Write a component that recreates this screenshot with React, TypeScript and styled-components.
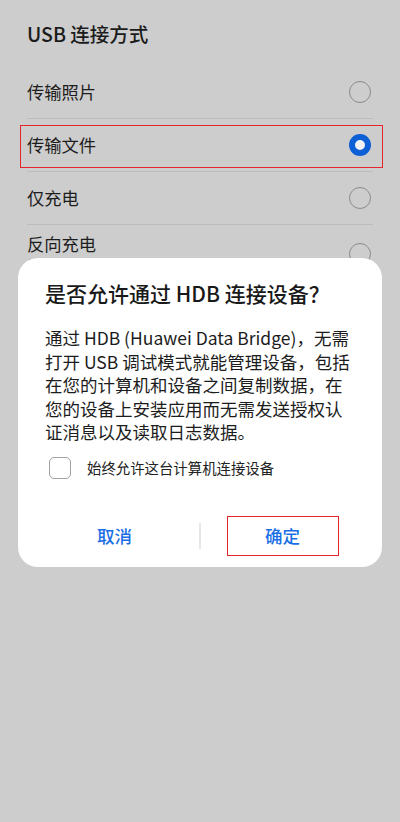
import React, { useState } from "react";
import styled, { createGlobalStyle } from "styled-components";

const GlobalStyle = createGlobalStyle`
  html, body {
    margin: 0;
    padding: 0;
    background: #cdcdcd;
  }
  body {
    font-family: "Noto Sans CJK SC", "Noto Sans", Roboto, sans-serif;
    -webkit-font-smoothing: antialiased;
  }
`;

const Screen = styled.div`
  position: relative;
  width: 400px;
  height: 822px;
  background: #cdcdcd;
  overflow: hidden;
`;

const Page = styled.div`
  display: flex;
  flex-direction: column;
  padding: 14px 27px 0 27px;
`;

const PageTitle = styled.h1`
  margin: 0;
  font-size: 19.5px;
  line-height: 40px;
  font-weight: 500;
  color: #1b1b1b;
  height: 40px;
  margin-bottom: 12px;
`;

const OptionList = styled.div`
  display: flex;
  flex-direction: column;
`;

const Option = styled.div<{ $last?: boolean }>`
  position: relative;
  display: flex;
  align-items: center;
  justify-content: space-between;
  min-height: 52px;
  border-bottom: ${(p) => (p.$last ? "none" : "1px solid #bcbcbc")};
`;

const OptionText = styled.div<{ $withHint?: boolean }>`
  display: flex;
  flex-direction: column;
  padding: ${(p) => (p.$withHint ? "7px 0 8px" : "0")};
`;

const OptionLabel = styled.span`
  font-size: 17.3px;
  color: #1d1d1d;
  line-height: 24px;
`;

const OptionHint = styled.span`
  font-size: 13px;
  color: #777;
  line-height: 18px;
`;

const Radio = styled.span<{ $on?: boolean }>`
  box-sizing: border-box;
  width: 22px;
  height: 22px;
  margin-right: 2px;
  border-radius: 50%;
  border: ${(p) => (p.$on ? "6px solid #0d5fd6" : "1.3px solid #8b8b8b")};
  background: ${(p) => (p.$on ? "#f2f2f2" : "transparent")};
`;

const Highlight = styled.span`
  position: absolute;
  left: -7px;
  right: -10px;
  top: 6px;
  bottom: 3px;
  border: 1.5px solid #e4262c;
  pointer-events: none;
`;

const Dialog = styled.div`
  position: absolute;
  left: 18px;
  top: 258px;
  width: 364px;
  box-sizing: border-box;
  background: #ffffff;
  border-radius: 20px;
  padding: 21px 27px 11px 27px;
  display: flex;
  flex-direction: column;
`;

const DialogTitle = styled.h2`
  margin: 0;
  font-size: 21px;
  line-height: 28px;
  font-weight: 500;
  color: #191919;
  white-space: nowrap;
`;

const DialogBody = styled.p`
  margin: 19px 0 0 0;
  font-size: 17.5px;
  line-height: 23.5px;
  color: #1c1c1c;
`;

const CheckRow = styled.label`
  display: flex;
  align-items: center;
  gap: 16px;
  margin-top: 13px;
  padding-left: 4px;
  height: 22px;
  cursor: pointer;
`;

const CheckBox = styled.span<{ $on?: boolean }>`
  box-sizing: border-box;
  width: 22px;
  height: 22px;
  border-radius: 5px;
  border: 1.5px solid #a3a3a3;
  background: ${(p) => (p.$on ? "#0d5fd6" : "#fff")};
`;

const CheckText = styled.span`
  font-size: 14.4px;
  color: #222;
  line-height: 22px;
`;

const ButtonRow = styled.div`
  display: grid;
  grid-template-columns: 1fr 2px 1fr;
  align-items: center;
  margin: 37px -15px 0 -15px;
  height: 40px;
`;

const Divider = styled.span`
  width: 2px;
  height: 26px;
  background: #e6e6e6;
`;

const ActionButton = styled.button<{ $marked?: boolean }>`
  justify-self: center;
  width: 112px;
  height: 40px;
  margin-left: ${(p) => (p.$marked ? "-6px" : "0")};
  box-sizing: border-box;
  border: ${(p) => (p.$marked ? "1.5px solid #e4262c" : "none")};
  background: transparent;
  font-family: inherit;
  font-size: 17.5px;
  font-weight: 500;
  color: #1a6fe6;
  padding: 0;
  cursor: pointer;
`;

const options = [
  { label: "传输照片" },
  { label: "传输文件" },
  { label: "仅充电" },
  { label: "反向充电", hint: "为连接的设备充电" },
];

export default function App() {
  const [selected, setSelected] = useState(1);
  const [always, setAlways] = useState(false);

  return (
    <Screen>
      <GlobalStyle />
      <Page>
        <PageTitle>USB 连接方式</PageTitle>
        <OptionList>
          {options.map((opt, i) => (
            <Option key={opt.label} $last={i === options.length - 1} onClick={() => setSelected(i)}>
              <OptionText $withHint={!!opt.hint}>
                <OptionLabel>{opt.label}</OptionLabel>
                {opt.hint && <OptionHint>{opt.hint}</OptionHint>}
              </OptionText>
              <Radio $on={selected === i} />
              {i === 1 && <Highlight />}
            </Option>
          ))}
        </OptionList>
      </Page>

      <Dialog>
        <DialogTitle>是否允许通过 HDB 连接设备？</DialogTitle>
        <DialogBody>
          通过 HDB (Huawei Data Bridge)，无需打开 USB 调试模式就能管理设备，包括在您的计算机和设备之间复制数据，在您的设备上安装应用而无需发送授权认证消息以及读取日志数据。
        </DialogBody>
        <CheckRow onClick={() => setAlways(!always)}>
          <CheckBox $on={always} />
          <CheckText>始终允许这台计算机连接设备</CheckText>
        </CheckRow>
        <ButtonRow>
          <ActionButton>取消</ActionButton>
          <Divider />
          <ActionButton $marked>确定</ActionButton>
        </ButtonRow>
      </Dialog>
    </Screen>
  );
}
